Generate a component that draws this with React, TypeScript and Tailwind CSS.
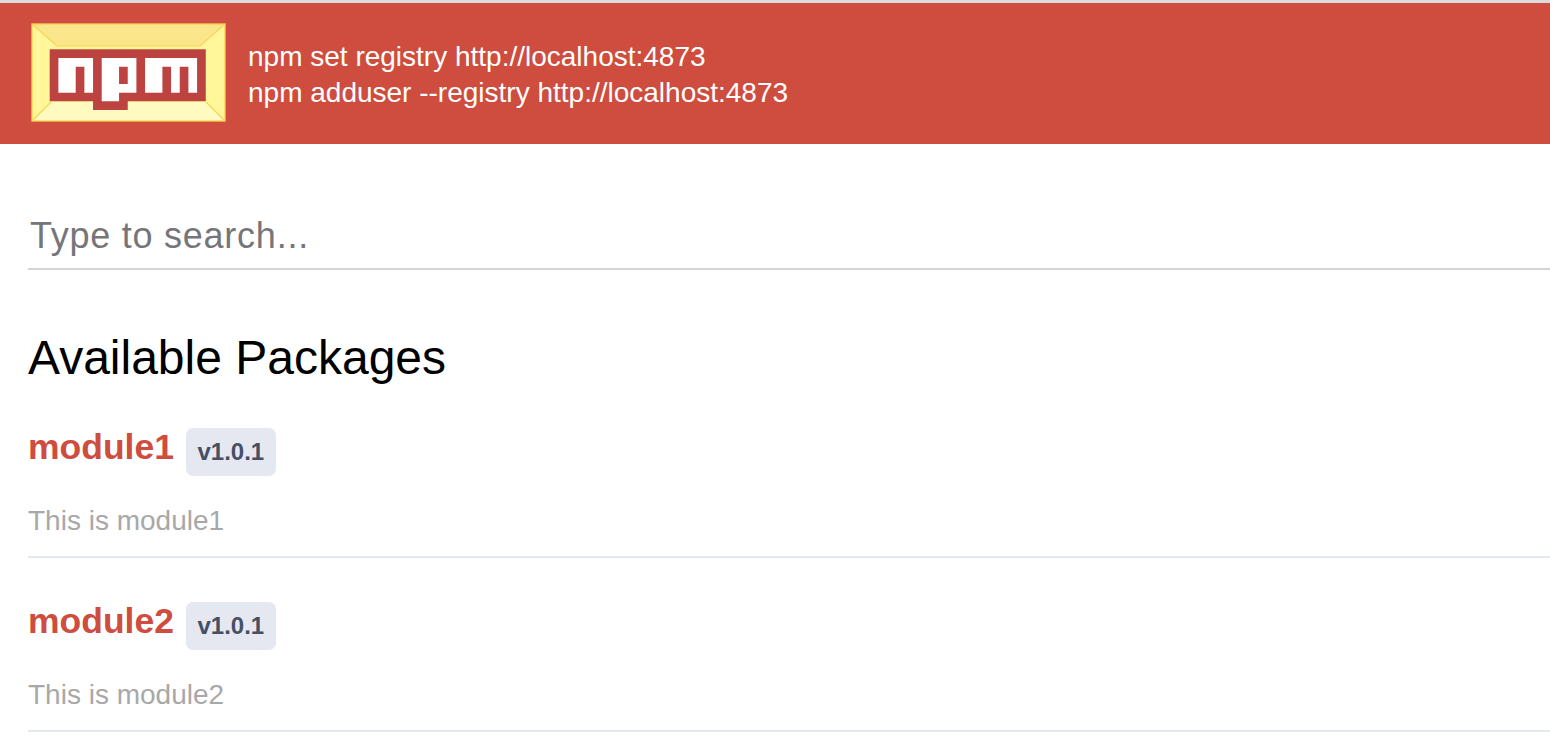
const packages = [
  { name: 'module1', version: 'v1.0.1', desc: 'This is module1' },
  { name: 'module2', version: 'v1.0.1', desc: 'This is module2' },
]

function NpmLogo() {
  return (
    <svg width="196" height="100" viewBox="0 0 196 100" className="block shrink-0">
      <rect x="1" y="1" width="193" height="97" fill="#fff79a" />
      <polygon points="1,1 194,1 169,23 26,23" fill="#fce68c" />
      <polygon points="1,98 194,98 175,79 20,79" fill="#fffbc0" />
      <rect x="1" y="1" width="193" height="97" fill="none" stroke="#fbd355" strokeWidth="1.300" />
      <path d="M1 1 26 23H169L194 1M1 98 20 79M194 98 175 79" fill="none" stroke="#fbd355" strokeWidth="1.200" />
      <g transform="translate(18.700 26.300) scale(8.670)">
        <path d="M0 0H18V6H9V7H5V6H0Z" fill="#bc433f" />
        <path d="M1 1H5V5H4V2H3V5H1ZM6 1H10V5H8V6H6ZM8 2V4H9V2ZM11 1H17V5H16V2H15V5H14V2H13V5H11Z" fill="#fff" fillRule="evenodd" />
      </g>
    </svg>
  )
}

export default function App() {
  return (
    <div className="min-h-[744px] bg-white overflow-hidden font-['Liberation_Sans',Arial,sans-serif]">
      {/* Header */}
      <header className="border-t-[3px] border-[#dcdcdc] bg-[#ce4d3e] h-[144px] pt-[19.500px] pl-[31px] flex gap-[21px]">
        <NpmLogo />
        <div className="pt-[16.500px] text-white text-[28px] leading-[36px]">
          <div>npm set registry http://localhost:4873</div>
          <div>npm adduser --registry http://localhost:4873</div>
        </div>
      </header>

      <main className="pl-[28px]">
        <input
          type="text"
          placeholder="Type to search..."
          className="block w-full h-[60px] mt-[66px] pl-[2px] pb-[6px] border-b-2 border-[#d4d4d4] text-[36px] tracking-[0.75px] outline-none placeholder:text-[#75757a]"
        />

        <h1 className="mt-[57px] text-[48px] leading-[62px] text-black">Available Packages</h1>

        {/* Package list */}
        <div className="mt-[39px]">
          {packages.map((pkg) => (
            <div key={pkg.name} className="h-[130px] mb-[44px] border-b-2 border-[#e6e8f1]">
              <div className="flex items-start h-[48px] gap-[12px]">
                <span className="text-[35.500px] leading-[39px] font-bold text-[#ce4d3e]">{pkg.name}</span>
                <span className="h-[48px] px-[11.500px] flex items-center rounded-[7px] bg-[#e6e8f1] text-[24px] font-bold text-[#465065]">
                  {pkg.version}
                </span>
              </div>
              <p className="mt-[28px] text-[28px] leading-[34px] text-[#a8a8a8]">{pkg.desc}</p>
            </div>
          ))}
        </div>
      </main>
    </div>
  )
}
